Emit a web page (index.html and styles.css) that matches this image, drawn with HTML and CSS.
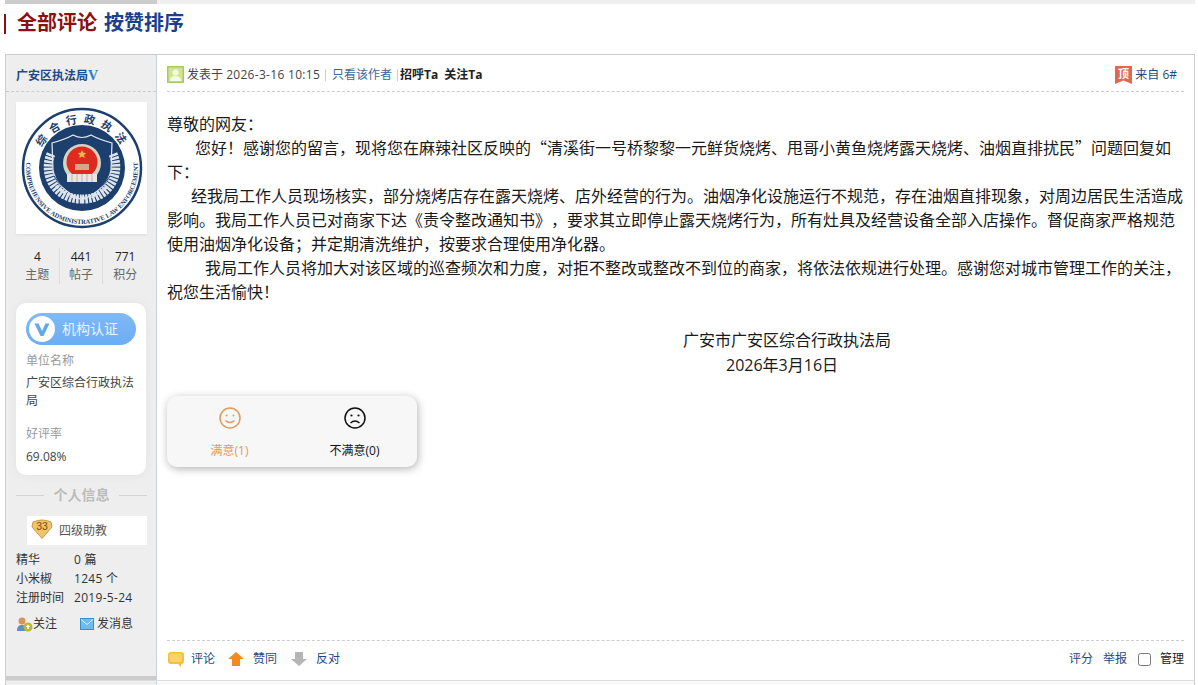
FILE: index.html
```html
<!DOCTYPE html>
<html lang="zh-CN">
<head>
<meta charset="utf-8">
<title>全部评论</title>
<link rel="stylesheet" href="styles.css">
</head>
<body>
<div class="topbar"><div class="topbar-left"></div><div class="topbar-right"></div></div>
<h2 class="heading"><span class="heading-bar"></span><span class="heading-red">全部评论</span><span class="heading-blue">按赞排序</span></h2>

<div class="post">
  <aside class="side">
    <div class="author"><a>广安区执法局</a><span class="vmark">V</span></div>
    <div class="avatar">
      <svg width="131" height="132" viewBox="0 0 131 132">
        <defs>
          <path id="arcTop" d="M 21 66 a 45 45 0 0 1 90 0"/>
          <path id="arcBottom" d="M17.500 38A56 56 0 1 0 114.500 38"/>
        </defs>
        <circle cx="66" cy="66" r="59" fill="#fff" stroke="#1c3f6e" stroke-width="2.500"/>
        <circle cx="66" cy="66" r="43" fill="#1c3f6e"/>
        <text class="em-cn" font-size="11" fill="#1c3f6e"><textPath href="#arcTop" startOffset="51%" text-anchor="middle" letter-spacing="6">综合行政执法</textPath></text>
        <text class="em-en" font-size="6.500" fill="#1c3f6e"><textPath href="#arcBottom" startOffset="50%" text-anchor="middle">COMPREHENSIVE ADMINISTRATIVE LAW ENFORCEMENT</textPath></text>
        <path d="M36 41Q50 37 57 33 66 38 75 33 82 37 96 41L95 68Q92 86 66 98 40 86 37 68Z" fill="none" stroke="#e6ebf1" stroke-width="1.200"/>
        <path d="M35 52A32 32 0 0 0 66 97" fill="none" stroke="#dfe5ec" stroke-width="9" stroke-dasharray="2.500 1"/>
        <path d="M97 52A32 32 0 0 1 66 97" fill="none" stroke="#dfe5ec" stroke-width="9" stroke-dasharray="2.500 1"/>
        <path d="M38 74Q48 91 66 91 84 91 94 74" fill="none" stroke="#1c3f6e" stroke-width="1"/>
        <circle cx="66" cy="61" r="19" fill="#d8d2c4"/>
        <circle cx="66" cy="60" r="15.500" fill="#dd2b22"/>
        <path d="M66 48l1.300 2.800 3 .3-2.200 2 .6 3-2.700-1.500-2.700 1.500.6-3-2.200-2 3-.3z" fill="#e9b94a"/>
        <path d="M59 62h14v6H59z" fill="#d8a58c"/>
        <path d="M51 72h30v8H51z" fill="#e8e6df"/>
        <path d="M56 72v8M61 72v8M66 72v8M71 72v8M76 72v8" stroke="#a9a9a2" stroke-width=".8"/>
        <path d="M40 84Q66 108 92 84" fill="none" stroke="#dfe5ec" stroke-width="3" stroke-dasharray="3 1.500"/>
      </svg>
    </div>
    <div class="stats">
      <div class="stat"><b>4</b><span>主题</span></div>
      <div class="stat"><b>441</b><span>帖子</span></div>
      <div class="stat"><b>771</b><span>积分</span></div>
    </div>
    <div class="cert-card">
      <div class="cert-pill">
        <svg class="cert-v" width="26" height="26" viewBox="0 0 26 26"><circle cx="13" cy="13" r="13" fill="#fff"/><path d="M5.500 7.500h4L13 15l3.500-7.500h4L14.500 20h-3z" fill="#63a7ee"/></svg>
        <span>机构认证</span>
      </div>
      <div class="cert-label">单位名称</div>
      <div class="cert-value">广安区综合行政执法局</div>
      <div class="cert-label cert-label-gap">好评率</div>
      <div class="cert-rate">69.08%</div>
    </div>
    <div class="divider"><i></i><span>个人信息</span><i></i></div>
    <div class="rank">
      <svg width="22" height="20" viewBox="0 0 22 20"><path d="M2 3Q11-1 20 3L21 8 11 19.500 1 8Z" fill="#f0c46a" stroke="#c99a3e"/><text x="11" y="10.500" text-anchor="middle" class="rank-num">33</text></svg>
      <span>四级助教</span>
    </div>
    <dl class="info">
      <div class="info-row"><dt>精华</dt><dd>0 篇</dd></div>
      <div class="info-row"><dt>小米椒</dt><dd>1245 个</dd></div>
      <div class="info-row"><dt>注册时间</dt><dd>2019-5-24</dd></div>
    </dl>
    <div class="side-links">
      <a class="side-link"><svg width="17" height="16" viewBox="0 0 17 16"><circle cx="6" cy="5" r="3.500" fill="#d9925e"/><path d="M1 15c0-5 2-6 5-6s5 1 5 6z" fill="#5f8fc5"/><circle cx="12" cy="11" r="4.500" fill="#b9b62f"/><path d="M12 8.500l2.200 2.500h-1.400v2h-1.600v-2H9.800z" fill="#fff"/></svg>关注</a>
      <a class="side-link"><svg width="14" height="12" viewBox="0 0 14 12"><rect x=".5" y=".5" width="13" height="11" fill="#6cbcf0" stroke="#3b8fd0"/><path d="M1 1.500l6 5 6-5" fill="none" stroke="#e6f5ff"/></svg>发消息</a>
    </div>
  </aside>

  <main class="content">
    <div class="meta">
      <div class="meta-left">
        <svg class="meta-icon" width="17" height="17" viewBox="0 0 17 17"><rect width="17" height="17" fill="#a9cc55"/><rect x="1.500" y="1.500" width="14" height="14" fill="#cfe58f"/><circle cx="8.500" cy="6.500" r="3" fill="#f6fbe4"/><path d="M3 15c0-4 2.500-5 5.500-5s5.500 1 5.500 5z" fill="#f6fbe4"/></svg>
        <span class="meta-date">发表于 <span class="spaced">2026-3-16 10:15</span></span>
        <i class="sep"></i>
        <a class="meta-link">只看该作者</a>
        <i class="sep sep-tight"></i>
        <b class="meta-bold">招呼Ta</b>
        <b class="meta-bold meta-bold-gap">关注Ta</b>
      </div>
      <div class="meta-right">
        <svg width="17" height="18" viewBox="0 0 17 18"><path d="M0 0h17v18l-8.500-3.500L0 18z" fill="#dc6a50"/><text x="8.500" y="11.500" text-anchor="middle" class="top-mark">顶</text></svg>
        <span class="floor">来自 6#</span>
      </div>
    </div>

    <div class="message">
      <p>尊敬的网友：</p>
      <p class="ind-28">您好！感谢您的留言，现将您在麻辣社区反映的“清溪街一号桥黎黎一元鲜货烧烤、甩哥小黄鱼烧烤露天烧烤、油烟直排扰民”问题回复如下：</p>
      <p class="ind-24">经我局工作人员现场核实，部分烧烤店存在露天烧烤、店外经营的行为。油烟净化设施运行不规范，存在油烟直排现象，对周边居民生活造成影响。我局工作人员已对商家下达《责令整改通知书》，要求其立即停止露天烧烤行为，所有灶具及经营设备全部入店操作。督促商家严格规范使用油烟净化设备；并定期清洗维护，按要求合理使用净化器。</p>
      <p class="ind-38">我局工作人员将加大对该区域的巡查频次和力度，对拒不整改或整改不到位的商家，将依法依规进行处理。感谢您对城市管理工作的关注，祝您生活愉快！</p>
      <p class="sign-org">广安市广安区综合行政执法局</p>
      <p class="sign-date">2026年3月16日</p>
    </div>

    <div class="rating">
      <div class="rating-item rating-good">
        <svg width="24" height="24" viewBox="0 0 24 24"><circle cx="12" cy="12" r="10" fill="none" stroke="currentColor" stroke-width="1.500"/><circle cx="8.500" cy="9.500" r="1" fill="currentColor"/><circle cx="15.500" cy="9.500" r="1" fill="currentColor"/><path d="M7.500 14.500q4.500 4 9 0" fill="none" stroke="currentColor" stroke-width="1.500"/></svg>
        <span>满意(1)</span>
      </div>
      <div class="rating-item">
        <svg width="24" height="24" viewBox="0 0 24 24"><circle cx="12" cy="12" r="10" fill="none" stroke="currentColor" stroke-width="1.500"/><circle cx="8.500" cy="9.500" r="1.100" fill="currentColor"/><circle cx="15.500" cy="9.500" r="1.100" fill="currentColor"/><path d="M7.500 17q4.500-4 9 0" fill="none" stroke="currentColor" stroke-width="1.500"/></svg>
        <span>不满意(0)</span>
      </div>
    </div>

    <div class="actions">
      <div class="actions-left">
        <a class="action"><svg width="18" height="17" viewBox="0 0 18 17"><path d="M4 1h10q3 0 3 3v6q0 3-3 3v3l-3-3H4q-3 0-3-3V4q0-3 3-3z" fill="#f7bd3c"/><path d="M4 2.500h9q2 0 2 2V9q0 2-2 2H5Q2.500 11 2.500 8V4q0-1.500 1.500-1.500z" fill="#fcd36a"/></svg><span>评论</span></a>
        <a class="action"><svg width="16" height="14" viewBox="0 0 16 14"><path d="M8 0l8 7h-4v7H4V7H0z" fill="#f28a1e"/></svg><span>赞同</span></a>
        <a class="action"><svg width="16" height="14" viewBox="0 0 16 14"><path d="M8 14L0 7h4V0h8v7h4z" fill="#b5b5b5"/></svg><span>反对</span></a>
      </div>
      <div class="actions-right">
        <a>评分</a>
        <a>举报</a>
        <label class="manage"><input type="checkbox">管理</label>
      </div>
    </div>
  </main>
</div>
<div class="next"><div class="next-side"></div><div class="next-main"></div></div>
</body>
</html>
```

FILE: styles.css
```css
* { box-sizing: border-box; }
html, body { margin: 0; padding: 0; height: 685px; overflow: hidden; background: #fff; }
body { font: 12px/18px "Open Sans", "Noto Sans CJK SC", sans-serif; color: #333; text-spacing-trim: space-all; }
a { color: #1f4a80; text-decoration: none; }

.topbar { display: flex; height: 4px; margin-left: 5px; margin-right: 3px; }
.topbar-left { width: 152px; background: #ccc; }
.topbar-right { flex: 1; background: #f0f0f0; }

.heading { display: flex; align-items: center; margin: 0 0 0 4px; height: 50px; padding-bottom: 14px; font: 700 20px/26px "Noto Sans CJK SC", sans-serif; white-space: nowrap; }
.heading-bar { width: 2px; height: 20px; background: #8c1010; margin-right: 11px; margin-top: 3px; }
.heading-red { color: #8c1010; margin-right: 7px; }
.heading-blue { color: #1a3f8f; }

.post { display: flex; height: 626px; margin: 0 3px 0 5px; border: 1px solid #ccc; border-bottom: 0; }
.side { width: 151px; flex: none; background: #eee; border-right: 1px solid #ccd2d8; border-bottom: 4px solid #ccc; padding: 0 9px 0 10px; }
.author { height: 37px; border-bottom: 1px dashed #ccc; margin: 0 -9px 0 -10px; padding: 11px 0 0 10px; font-weight: 700; line-height: 20px; white-space: nowrap; }
.author a { color: #1f4a8c; font-size: 12px; }
.vmark { color: #2a7ec0; font: 700 14px/20px "Liberation Serif", serif; }

.avatar { width: 131px; height: 132px; margin-top: 10px; background: #fff; box-shadow: 0 1px 2px #ddd; }
.avatar svg { display: block; }
.em-cn { font-family: "Noto Sans CJK SC", sans-serif; font-weight: 700; }
.em-en { font-family: "Liberation Serif", serif; font-weight: 700; }

.stats { display: flex; margin-top: 14px; height: 36px; }
.stat { width: 44px; display: flex; flex-direction: column; align-items: center; border-right: 1px solid #ddd; }
.stat:last-child { border-right: 0; }
.stat b { font-weight: 400; color: #222; font-size: 12px; line-height: 18px; }
.stat span { color: #666; line-height: 18px; }

.cert-card { width: 130px; height: 172px; margin-top: 19px; background: #fff; border-radius: 10px; padding: 10px 10px 0; box-shadow: 0 0 8px #e2e2e2; }
.cert-pill { width: 110px; height: 32px; border-radius: 16px; background: linear-gradient(#80b9f5, #6cadf3); display: flex; align-items: center; padding-left: 3px; color: #eaf4ff; font-size: 14px; }
.cert-v { flex: none; margin-right: 7px; }
.cert-label { margin-top: 7px; color: #999; line-height: 18px; }
.cert-value { margin-top: 4px; line-height: 18px; color: #444; }
.cert-label-gap { margin-top: 15px; }
.cert-rate { margin-top: 5px; color: #444; line-height: 18px; }

.divider { display: flex; align-items: center; justify-content: space-between; margin-top: 11px; height: 18px; color: #bbb; font-weight: 700; font-size: 14px; }
.divider i { width: 28px; height: 1px; background: #d4d4d4; }

.rank { display: flex; align-items: center; width: 120px; height: 29px; margin: 12px 0 0 11px; background: #fff; padding-left: 4px; color: #555; }
.rank svg { margin-right: 6px; margin-top: -3px; }
.rank-num { font: 10.500px "Liberation Sans", sans-serif; fill: #7a4a10; }

.info { margin: 5px 0 0; }
.info-row { display: flex; height: 19px; line-height: 19px; color: #333; }
.info dt { width: 58px; white-space: nowrap; }
.info dd { margin: 0; white-space: nowrap; letter-spacing: .3px; }

.side-links { display: flex; margin-top: 8px; height: 18px; align-items: center; }
.side-link { display: flex; align-items: center; color: #333; }
.side-link:first-child { width: 64px; }
.side-link svg { margin-right: 0; }
.side-link:last-child svg { margin-right: 3px; }

.content { flex: 1; min-width: 0; padding: 0 10px; display: flex; flex-direction: column; }
.meta { display: flex; justify-content: space-between; align-items: center; height: 37px; padding-top: 3px; border-bottom: 1px dashed #ccc; flex: none; }
.meta-left, .meta-right { display: flex; align-items: center; white-space: nowrap; }
.meta-icon { margin-right: 2px; }
.meta-date { color: #444; margin-left: 1px; }
.spaced { letter-spacing: .3px; }
.sep { width: 1px; height: 12px; background: #ccc; margin: 0 6px 0 5px; }
.sep-tight { margin: 0 2px 0 5px; }
.meta-link { color: #3a6a9c; }
.meta-bold { color: #222; font-weight: 700; }
.meta-bold-gap { margin-left: 6px; }
.floor { color: #1f4a80; margin-left: 3px; margin-right: 7px; }
.top-mark { font: 700 11px "Noto Sans CJK SC", sans-serif; fill: #fff; }

.message { padding-top: 19px; font: 16px/24px "Noto Sans CJK SC", sans-serif; color: #1a1a1a; flex: none; }
.message p { margin: 0; }
.ind-28 { text-indent: 28px; }
.ind-24 { text-indent: 24px; }
.ind-38 { text-indent: 38px; }
.message .sign-org { margin-top: 24px; text-indent: 516px; }
.message .sign-date { padding-top: 2px; text-indent: 559px; font-family: "Open Sans", "Noto Sans CJK SC", sans-serif; }

.rating { display: flex; width: 250px; height: 71px; margin-top: 19px; background: #f7f7f7; border-radius: 10px; box-shadow: 1px 2px 8px rgba(0,0,0,.3); flex: none; }
.rating-item { width: 125px; display: flex; flex-direction: column; align-items: center; padding-top: 10px; color: #111; }
.rating-item span { margin-top: 12px; }
.rating-good { color: #e39a5c; }

.actions { margin-top: auto; display: flex; justify-content: space-between; align-items: center; height: 40px; padding-bottom: 3px; border-top: 1px dashed #ccc; }
.actions-left, .actions-right { display: flex; align-items: center; }
.action { display: flex; align-items: center; margin-right: 14px; }
.action svg { margin-right: 9px; }
.action:first-child { margin-right: 13px; }
.action:first-child svg { margin-right: 6px; }
.actions-right a { margin-right: 10px; }
.manage { display: flex; align-items: center; color: #222; }
.manage input { width: 13px; height: 13px; margin: 0 9px 0 1px; }

.next { display: flex; height: 5px; margin: 0 3px 0 5px; border: 1px solid #ccc; border-bottom: 0; border-top-color: #ddd; }
.next-side { width: 151px; background: #eee; border-right: 1px solid #ccd2d8; }
.next-main { flex: 1; background: #fafafa; }
```
